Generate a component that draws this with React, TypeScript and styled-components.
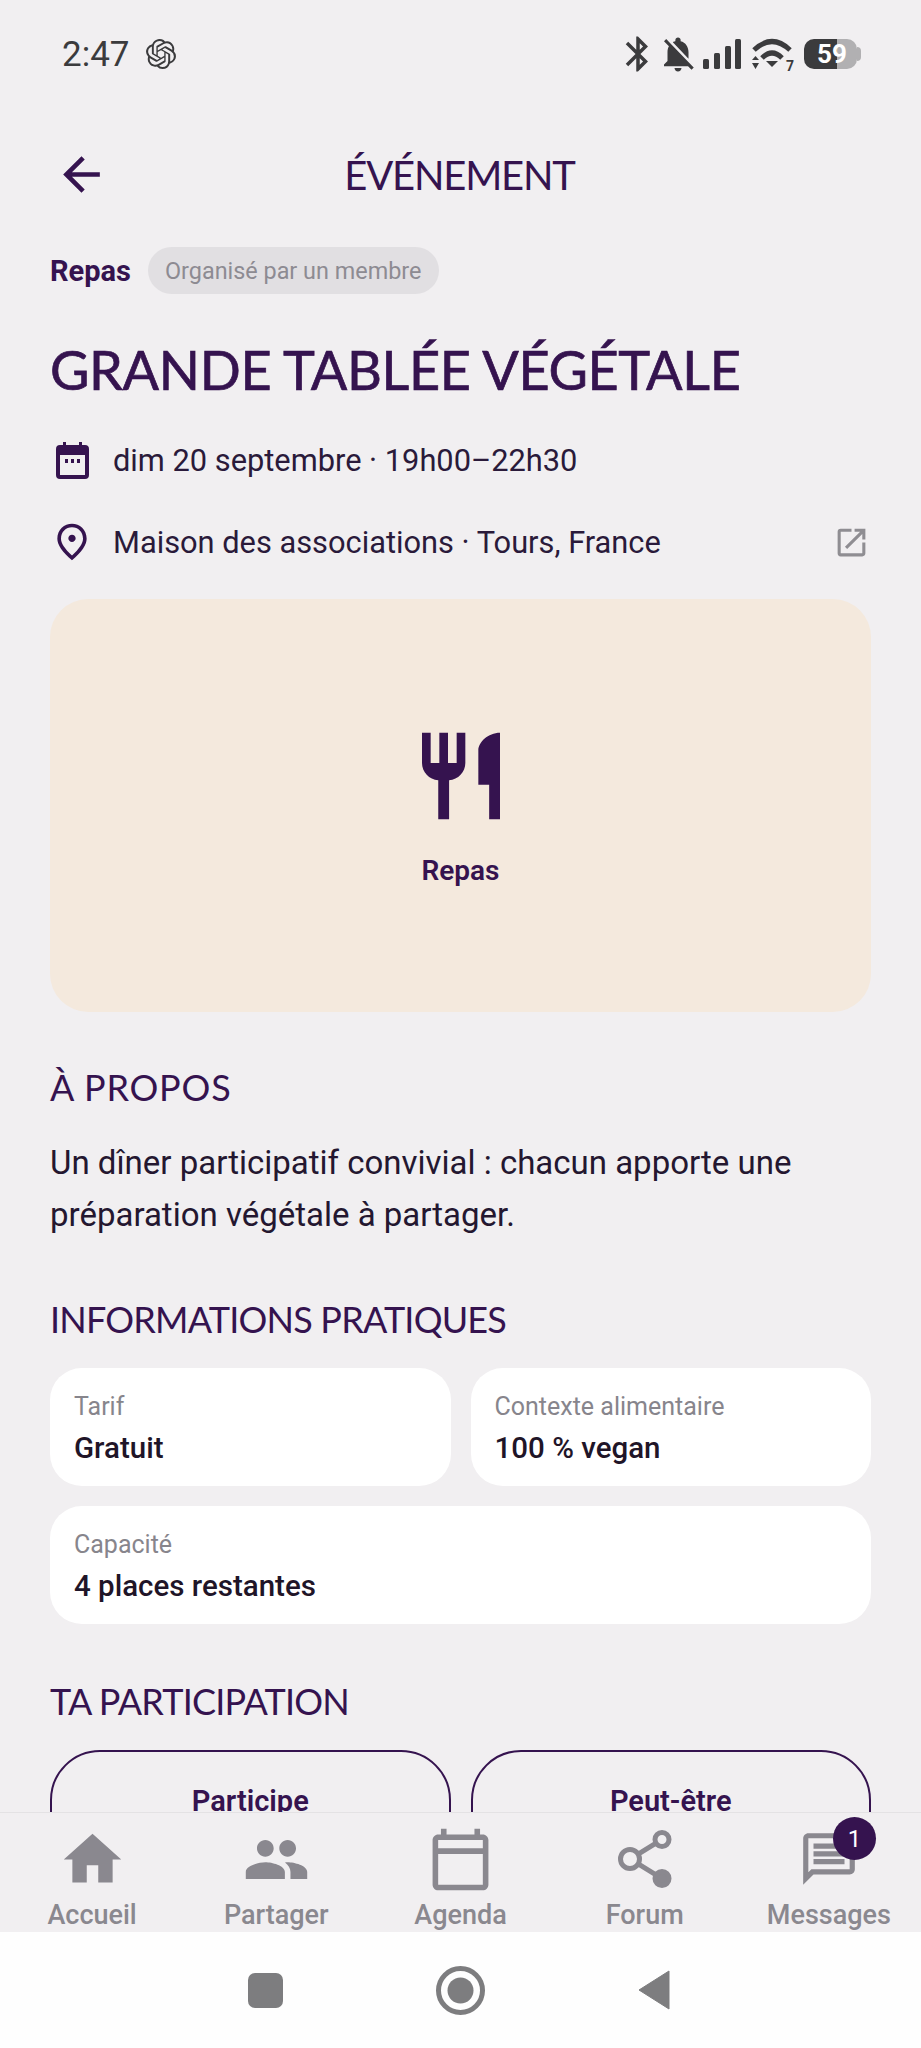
import React from 'react';
import styled, {createGlobalStyle} from 'styled-components';
import {SiOpenai} from 'react-icons/si';
import {
  MdArrowBack,
  MdBluetooth,
  MdHome,
  MdNotificationsOff,
  MdOpenInNew,
  MdOutlineCalendarToday,
  MdOutlineMessage,
  MdOutlinePlace,
  MdPeople,
  MdRestaurant,
} from 'react-icons/md';

const PURPLE = '#35134f';
const DISPLAY = '"Lato", "Liberation Sans", sans-serif';
const BODY = 'Roboto, "Liberation Sans", sans-serif';

const GlobalStyle = createGlobalStyle`
  html, body {
    margin: 0;
    padding: 0;
    background: #f1eff1;
    font-family: ${BODY};
  }
  * {
    box-sizing: border-box;
  }
`;

const Screen = styled.div`
  width: 921px;
  height: 2048px;
  display: flex;
  flex-direction: column;
  overflow: hidden;
  background: #f1eff1;
`;

const StatusBar = styled.div`
  height: 108px;
  flex: none;
  display: flex;
  align-items: center;
  justify-content: space-between;
  padding: 0 60px 0 62px;
  color: #3b3b3d;
`;

const StatusGroup = styled.div`
  display: flex;
  align-items: center;
  gap: ${({$gap}: {$gap: number}) => $gap}px;
`;

const StatusSlot = styled.div`
  display: flex;
  margin-left: ${({$left}: {$left: number}) => $left}px;
`;

const Clock = styled.span`
  font-size: 35px;
  font-weight: 400;
`;

const Battery = styled.div`
  display: flex;
  align-items: center;
  margin-left: 12px;
`;

const BatteryBody = styled.div`
  width: 53px;
  height: 30px;
  border-radius: 10px;
  display: flex;
  align-items: center;
  color: #fff;
  font-size: 26px;
  font-weight: 700;
  background: linear-gradient(90deg, #3b3b3d 0 33px, #b1b0b2 33px 100%);
  padding-left: 13px;
`;

const BatteryNub = styled.div`
  width: 4px;
  height: 14px;
  border-radius: 0 4px 4px 0;
  background: #b1b0b2;
`;

const WifiWrap = styled.div`
  position: relative;
  width: 40px;
  height: 32px;
  margin-left: 11px;
  display: flex;
`;

const WifiDigit = styled.span`
  position: absolute;
  right: -2px;
  bottom: -4px;
  font-size: 14px;
  font-weight: 700;
`;

const Content = styled.div`
  flex: 1;
  min-height: 0;
  overflow: hidden;
  padding: 0 50px;
`;

const Header = styled.div`
  position: relative;
  height: 66px;
  margin-top: 34px;
  display: flex;
  align-items: center;
  justify-content: center;
`;

const BackButton = styled.div`
  position: absolute;
  left: 4px;
  top: 5px;
  color: ${PURPLE};
  display: flex;
`;

const HeaderTitle = styled.div`
  font-family: ${DISPLAY};
  font-size: 40px;
  font-weight: 400;
  color: ${PURPLE};
  letter-spacing: -1.2px;
  margin-right: 2px;
`;

const ChipRow = styled.div`
  margin-top: 39px;
  display: flex;
  align-items: center;
  gap: 17px;
`;

const Category = styled.span`
  font-size: 29px;
  font-weight: 700;
  color: ${PURPLE};
`;

const Chip = styled.span`
  height: 47px;
  padding: 0 18px 0 17px;
  border-radius: 24px;
  background: #e1dfe2;
  color: #8d8b92;
  font-size: 23.4px;
  display: flex;
  align-items: center;
`;

const Title = styled.h1`
  margin: 39px 0 0;
  font-family: ${DISPLAY};
  font-size: 54px;
  font-weight: 400;
  line-height: 74px;
  letter-spacing: -0.35px;
  -webkit-text-stroke: 0.7px ${PURPLE};
  color: ${PURPLE};
`;

const MetaRow = styled.div`
  display: flex;
  align-items: center;
  height: 40px;
  margin-top: ${({$top}: {$top: number}) => $top}px;
  color: #2a1a3a;
  font-size: 30.8px;
`;

const MetaIcon = styled.div`
  width: 44px;
  margin-right: 19px;
  flex: none;
  color: ${PURPLE};
  display: flex;
  justify-content: center;
`;

const MetaAction = styled.div`
  margin-left: auto;
  margin-right: 1px;
  color: #8f8d92;
  display: flex;
`;

const Hero = styled.div`
  margin-top: 37px;
  height: 413px;
  border-radius: 38px;
  background: #f4e9dd;
  display: flex;
  flex-direction: column;
  align-items: center;
  justify-content: center;
  color: ${PURPLE};
`;

const HeroLabel = styled.div`
  margin-top: 26px;
  font-size: 28px;
  font-weight: 600;
`;

const SectionTitle = styled.h2<{$top: number; $spacing: number}>`
  margin: ${({$top}) => $top}px 0 0;
  font-family: ${DISPLAY};
  font-size: 36px;
  font-weight: 400;
  line-height: 48px;
  letter-spacing: ${({$spacing}) => $spacing}px;
  color: ${PURPLE};
`;

const Paragraph = styled.p`
  margin: 26px 0 0;
  font-size: 33px;
  line-height: 52px;
  color: #241730;
`;

const InfoGrid = styled.div`
  margin-top: 25px;
  display: grid;
  grid-template-columns: 1fr 1fr;
  gap: 20px;
`;

const InfoCard = styled.div<{$wide?: boolean}>`
  grid-column: ${({$wide}) => ($wide ? '1 / span 2' : 'auto')};
  height: 118px;
  border-radius: 32px;
  background: #fff;
  padding: 25px 24px 0;
`;

const InfoLabel = styled.div`
  font-size: 25px;
  line-height: 28px;
  color: #87858c;
`;

const InfoValue = styled.div`
  margin-top: 9px;
  font-size: 29.5px;
  line-height: 36px;
  font-weight: 500;
  color: #1f1528;
`;

const ChoiceRow = styled.div`
  margin-top: 25px;
  display: grid;
  grid-template-columns: 1fr 1fr;
  gap: 20px;
`;

const Choice = styled.div`
  height: 140px;
  border: 2px solid ${PURPLE};
  border-radius: 50px;
  padding-top: 32px;
  text-align: center;
  font-size: 29px;
  font-weight: 600;
  color: ${PURPLE};
`;

const TabBar = styled.div`
  flex: none;
  height: 120px;
  background: #f1eff1;
  border-top: 1px solid #e4e2e4;
  display: grid;
  grid-template-columns: repeat(5, 1fr);
  position: relative;
`;

const Tab = styled.div`
  display: flex;
  flex-direction: column;
  align-items: center;
  padding-top: 6px;
  color: #8a888f;
`;

const TabIcon = styled.div`
  position: relative;
  height: 80px;
  display: flex;
  align-items: center;
  justify-content: center;
`;

const TabLabel = styled.div`
  font-size: 27px;
  font-weight: 500;
  line-height: 32px;
`;

const Badge = styled.div`
  position: absolute;
  top: -2px;
  right: -16px;
  width: 43px;
  height: 43px;
  border-radius: 50%;
  background: ${PURPLE};
  color: #fff;
  font-size: 24px;
  display: flex;
  align-items: center;
  justify-content: center;
`;

const SystemBar = styled.div`
  flex: none;
  height: 116px;
  background: #fefefe;
  display: flex;
  align-items: center;
  justify-content: center;
  gap: 153px;
  padding-right: 4px;
`;

const SignalIcon = () => (
  <svg width="38" height="30" viewBox="0 0 38 30" fill="currentColor">
    <rect x="0" y="20" width="6" height="10" rx="1.5" />
    <rect x="11" y="14" width="6" height="16" rx="1.5" />
    <rect x="22" y="7" width="6" height="23" rx="1.5" />
    <rect x="32" y="0" width="6" height="30" rx="1.5" />
  </svg>
);

const WifiIcon = () => (
  <svg width="40" height="32" viewBox="0 0 40 32" fill="currentColor">
    <path d="M2 12 Q20 -5 38 12" fill="none" stroke="currentColor" strokeWidth="5" />
    <path d="M10 20 Q20 10 30 20" fill="none" stroke="currentColor" strokeWidth="5" />
    <path d="M14 23 H26 L20 29 Z" />
    <path d="M0 22 H7 L3.5 18 Z M0 25 H7 L3.5 31 Z" />
  </svg>
);

const CalendarIcon = () => (
  <svg width="33" height="37" viewBox="0 0 33 37" fill="currentColor">
    <path
      fillRule="evenodd"
      d="M7 0h3v3h13V0h3v3h3a4 4 0 0 1 4 4v26a4 4 0 0 1-4 4H4a4 4 0 0 1-4-4V7a4 4 0 0 1 4-4h3z M4 13v20h25V13z"
    />
    <rect x="9" y="17" width="3" height="4" />
    <rect x="15" y="17" width="3" height="4" />
    <rect x="21" y="17" width="3" height="4" />
  </svg>
);

const ForumIcon = () => (
  <svg width="54" height="58" viewBox="0 0 54 58" fill="none" stroke="currentColor" strokeWidth="5">
    <circle cx="44" cy="9.5" r="7" />
    <circle cx="12" cy="29" r="9.5" />
    <circle cx="44" cy="48.5" r="7" fill="currentColor" />
    <path d="M21.4 23.3 L37.2 13.7 M21.4 34.7 L37.2 44.3" />
  </svg>
);

const tabs = [
  {label: 'Accueil', icon: <MdHome size={69} />},
  {label: 'Partager', icon: <MdPeople size={67} />},
  {label: 'Agenda', icon: <MdOutlineCalendarToday size={67} />},
  {label: 'Forum', icon: <ForumIcon />},
  {label: 'Messages', icon: <MdOutlineMessage size={62} />, badge: 1},
];

export default function App() {
  return (
    <Screen>
      <GlobalStyle />
      <StatusBar>
        <StatusGroup $gap={16}>
          <Clock>2:47</Clock>
          <SiOpenai size={30} />
        </StatusGroup>
        <StatusGroup $gap={0}>
          <MdBluetooth size={42} />
          <StatusSlot $left={-2}><MdNotificationsOff size={42} /></StatusSlot>
          <StatusSlot $left={4}><SignalIcon /></StatusSlot>
          <WifiWrap>
            <WifiIcon />
            <WifiDigit>7</WifiDigit>
          </WifiWrap>
          <Battery>
            <BatteryBody>59</BatteryBody>
            <BatteryNub />
          </Battery>
        </StatusGroup>
      </StatusBar>
      <Content>
        <Header>
          <BackButton><MdArrowBack size={55} /></BackButton>
          <HeaderTitle>ÉVÉNEMENT</HeaderTitle>
        </Header>
        <ChipRow>
          <Category>Repas</Category>
          <Chip>Organisé par un membre</Chip>
        </ChipRow>
        <Title>GRANDE TABLÉE VÉGÉTALE</Title>
        <MetaRow $top={33}>
          <MetaIcon><CalendarIcon /></MetaIcon>
          dim 20 septembre · 19h00–22h30
        </MetaRow>
        <MetaRow $top={42}>
          <MetaIcon><MdOutlinePlace size={44} /></MetaIcon>
          Maison des associations · Tours, France
          <MetaAction><MdOpenInNew size={37} /></MetaAction>
        </MetaRow>
        <Hero>
          <MdRestaurant size={104} />
          <HeroLabel>Repas</HeroLabel>
        </Hero>
        <SectionTitle $top={51} $spacing={0.8}>À PROPOS</SectionTitle>
        <Paragraph>
          Un dîner participatif convivial : chacun apporte une préparation végétale à partager.
        </Paragraph>
        <SectionTitle $top={54} $spacing={-0.8}>INFORMATIONS PRATIQUES</SectionTitle>
        <InfoGrid>
          <InfoCard>
            <InfoLabel>Tarif</InfoLabel>
            <InfoValue>Gratuit</InfoValue>
          </InfoCard>
          <InfoCard>
            <InfoLabel>Contexte alimentaire</InfoLabel>
            <InfoValue>100 % vegan</InfoValue>
          </InfoCard>
          <InfoCard $wide>
            <InfoLabel>Capacité</InfoLabel>
            <InfoValue>4 places restantes</InfoValue>
          </InfoCard>
        </InfoGrid>
        <SectionTitle $top={53} $spacing={-0.8}>TA PARTICIPATION</SectionTitle>
        <ChoiceRow>
          <Choice>Participe</Choice>
          <Choice>Peut-être</Choice>
        </ChoiceRow>
      </Content>
      <TabBar>
        {tabs.map(tab => (
          <Tab key={tab.label}>
            <TabIcon>
              {tab.icon}
              {tab.badge && <Badge>{tab.badge}</Badge>}
            </TabIcon>
            <TabLabel>{tab.label}</TabLabel>
          </Tab>
        ))}
      </TabBar>
      <SystemBar>
        <svg width="35" height="35" viewBox="0 0 35 35"><rect width="35" height="35" rx="7" fill="#7d7d7f" /></svg>
        <svg width="49" height="49" viewBox="0 0 49 49"><circle cx="24.5" cy="24.5" r="22" fill="none" stroke="#7d7d7f" strokeWidth="5" /><circle cx="24.5" cy="24.5" r="13" fill="#7d7d7f" /></svg>
        <svg width="32" height="40" viewBox="0 0 32 40"><path d="M31 1 L1 20 L31 39 Z" fill="#7d7d7f" stroke="#7d7d7f" strokeLinejoin="round" /></svg>
      </SystemBar>
    </Screen>
  );
}
